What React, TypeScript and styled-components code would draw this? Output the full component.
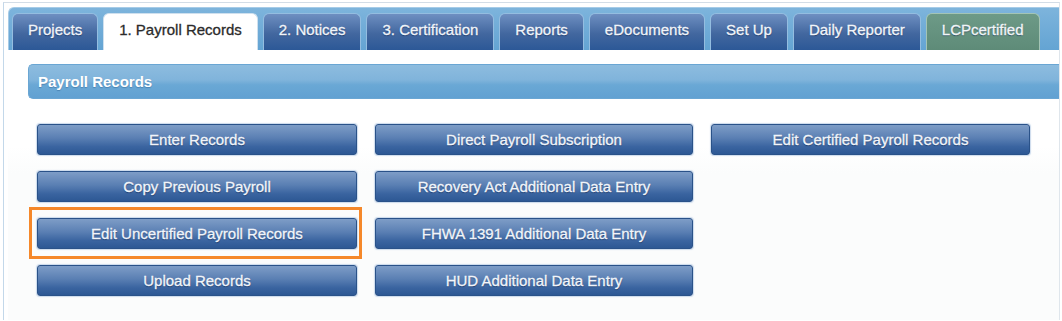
import React from "react";
import styled, { createGlobalStyle, css } from "styled-components";

const GlobalStyle = createGlobalStyle`
  body {
    margin: 0;
    background: #ffffff;
    font-family: "Liberation Sans", Arial, sans-serif;
  }
`;

const Frame = styled.div`
  margin: 2px 0 0 3px;
  width: 1057px;
  height: 318px;
  border-top: 1px solid #d3dde7;
  border-left: 1px solid #c3d8ea;
  border-right: 1px solid #dfe6ec;
  padding: 4px 0 0 4px;
  box-sizing: border-box;
  background: #ffffff;
`;

const TabBar = styled.div`
  display: flex;
  gap: 5px;
  height: 43px;
  padding: 5px 0 0 3px;
  box-sizing: border-box;
  background: linear-gradient(to bottom, #7db4dc, #64a4d3);
  border: 1px solid #a6cbe7;
  border-bottom: none;
  border-right: none;
  border-radius: 6px 0 0 0;
`;

const Tab = styled.div<{ $active?: boolean; $green?: boolean }>`
  height: 37px;
  padding: 0 15px 5px;
  box-sizing: border-box;
  display: flex;
  align-items: center;
  font-size: 15px;
  color: #f4f7fb;
  -webkit-text-stroke: 0.3px #eef3fa;
  text-shadow: 0 1px 1px rgba(10, 30, 70, 0.6);
  border: 1px solid #94bde0;
  border-bottom: none;
  border-radius: 6px 6px 0 0;
  background: linear-gradient(to bottom, #6e8fc1 0%, #42679f 55%, #2c5897 100%);
  white-space: nowrap;
  ${(p) =>
    p.$active &&
    css`
      background: #ffffff;
      color: #2b2b2b;
      -webkit-text-stroke: 0.3px #2b2b2b;
      text-shadow: none;
      border-color: #cfe0ee;
    `}
  ${(p) =>
    p.$green &&
    css`
      background: linear-gradient(to bottom, #6d9a87, #5e8b78);
      border-color: #a3c4b5;
      color: #f4f7f5;
    `}
`;

const Content = styled.div`
  padding: 14px 0 0 20px;
  background: linear-gradient(to bottom, #ffffff 0%, #ffffff 35%, #fbfcfc 45%, #fbfcfc 100%);
  height: 275px;
  box-sizing: border-box;
`;

const Header = styled.div`
  height: 35px;
  box-sizing: border-box;
  display: flex;
  align-items: center;
  padding-left: 9px;
  border: 1px solid #6aa6d3;
  border-right: none;
  border-radius: 5px 0 0 5px;
  background: linear-gradient(to bottom, #8dbcdf 0%, #80b4db 45%, #6aa8d5 60%, #61a1d2 100%);
  color: #ffffff;
  font-size: 15px;
  font-weight: bold;
  text-shadow: 0 1px 1px rgba(30, 80, 130, 0.4);
`;

const ButtonGrid = styled.div`
  display: grid;
  grid-template-columns: 320px 318px 319px;
  grid-auto-rows: 31px;
  column-gap: 18px;
  row-gap: 16px;
  margin: 25px 0 0 9px;
`;

const ActionButton = styled.button<{ $highlight?: boolean }>`
  position: relative;
  height: 31px;
  padding: 0;
  border: 1px solid #2a5289;
  border-radius: 3px;
  background: linear-gradient(to bottom, #7e9dc7 0%, #5a7fb3 45%, #3a64a0 75%, #2d5894 100%);
  box-shadow: 0 0 1px 1px rgba(170, 195, 225, 0.6);
  color: #f4f7fb;
  font-family: "Liberation Sans", Arial, sans-serif;
  font-size: 15px;
  -webkit-text-stroke: 0.3px #eef3fa;
  text-shadow: 0 1px 1px rgba(10, 30, 70, 0.6);
  cursor: pointer;
  ${(p) =>
    p.$highlight &&
    css`
      &::after {
        content: "";
        position: absolute;
        top: -12px;
        left: -9px;
        right: -6px;
        bottom: -11px;
        border: 3px solid #f5882a;
      }
    `}
`;

const Empty = styled.div``;

const tabs = [
  "Projects",
  "1. Payroll Records",
  "2. Notices",
  "3. Certification",
  "Reports",
  "eDocuments",
  "Set Up",
  "Daily Reporter",
  "LCPcertified",
];

const buttons: (string | null)[] = [
  "Enter Records",
  "Direct Payroll Subscription",
  "Edit Certified Payroll Records",
  "Copy Previous Payroll",
  "Recovery Act Additional Data Entry",
  null,
  "Edit Uncertified Payroll Records",
  "FHWA 1391 Additional Data Entry",
  null,
  "Upload Records",
  "HUD Additional Data Entry",
  null,
];

const App = () => {
  return (
    <>
      <GlobalStyle />
      <Frame>
        <TabBar>
          {tabs.map((t) => (
            <Tab key={t} $active={t === "1. Payroll Records"} $green={t === "LCPcertified"}>
              {t}
            </Tab>
          ))}
        </TabBar>
        <Content>
          <Header>Payroll Records</Header>
          <ButtonGrid>
            {buttons.map((b, i) =>
              b ? (
                <ActionButton key={i} $highlight={b === "Edit Uncertified Payroll Records"}>
                  {b}
                </ActionButton>
              ) : (
                <Empty key={i} />
              )
            )}
          </ButtonGrid>
        </Content>
      </Frame>
    </>
  );
};

export default App;
